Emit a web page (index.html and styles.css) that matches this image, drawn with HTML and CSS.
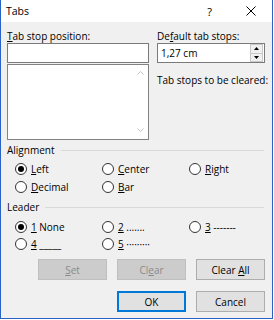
FILE: index.html
```html
<!DOCTYPE html>
<html>
<head>
<meta charset="utf-8">
<link rel="stylesheet" href="styles.css">
</head>
<body>
<div class="window">
  <div class="titlebar">
    <span class="title">Tabs</span>
    <span class="help">?</span>
    <svg class="close" width="10" height="10" viewBox="0 0 10 10"><path d="M0.5 0.5 L9.5 9.5 M9.5 0.5 L0.5 9.5" stroke="#000" stroke-width="1"/></svg>
  </div>
  <div class="content">
    <div class="top">
      <div class="col">
        <div class="label"><u>T</u>ab stop position:</div>
        <div class="input"></div>
        <div class="list">
          <div class="list-body"></div>
          <div class="scroll">
            <svg width="7" height="4" viewBox="0 0 7 4"><path d="M0.5 3.5 L3.5 0.5 L6.5 3.5" fill="none" stroke="#c4c4c4" stroke-width="1"/></svg>
            <svg width="7" height="4" viewBox="0 0 7 4"><path d="M0.5 0.5 L3.5 3.5 L6.5 0.5" fill="none" stroke="#c4c4c4" stroke-width="1"/></svg>
          </div>
        </div>
      </div>
      <div class="col">
        <div class="label">De<u>f</u>ault tab stops:</div>
        <div class="spin">
          <span class="spin-val">1,27 cm</span>
          <div class="spin-btns">
            <div class="sbtn"><svg width="5" height="3" viewBox="0 0 5 3"><path d="M0 3 L2.5 0 L5 3 Z" fill="#000"/></svg></div>
            <div class="sbtn"><svg width="5" height="3" viewBox="0 0 5 3"><path d="M0 0 L2.5 3 L5 0 Z" fill="#000"/></svg></div>
          </div>
        </div>
        <div class="label cleared">Tab stops to be cleared:</div>
      </div>
    </div>

    <div class="group-label"><span>Alignment</span><div class="rule"></div></div>
    <div class="radios align">
      <div class="radio"><span class="dot on"></span><span><u>L</u>eft</span></div>
      <div class="radio"><span class="dot"></span><span><u>C</u>enter</span></div>
      <div class="radio"><span class="dot"></span><span><u>R</u>ight</span></div>
      <div class="radio"><span class="dot"></span><span><u>D</u>ecimal</span></div>
      <div class="radio"><span class="dot"></span><span><u>B</u>ar</span></div>
    </div>

    <div class="group-label leader-label"><span>Leader</span><div class="rule"></div></div>
    <div class="radios leader">
      <div class="radio"><span class="dot on"></span><span><u>1</u> None</span></div>
      <div class="radio"><span class="dot"></span><span><u>2</u> .......</span></div>
      <div class="radio"><span class="dot"></span><span><u>3</u> -------</span></div>
      <div class="radio"><span class="dot"></span><span><u>4</u> _____</span></div>
      <div class="radio"><span class="dot"></span><span><u>5</u> ·········</span></div>
    </div>

    <div class="btn-row first">
      <div class="btn disabled"><span><u>S</u>et</span></div>
      <div class="btn disabled"><span>Cl<u>e</u>ar</span></div>
      <div class="btn"><span>Clear <u>A</u>ll</span></div>
    </div>
    <div class="btn-row second">
      <div class="btn primary"><span>OK</span></div>
      <div class="btn"><span>Cancel</span></div>
    </div>
  </div>
</div>
</body>
</html>
```

FILE: styles.css
```css
html, body {
  margin: 0;
  padding: 0;
  background: #ffffff;
}
body {
  font-family: "Open Sans", "Noto Sans", sans-serif;
  font-size: 10px;
  color: #000;
}
u {
  text-decoration: underline;
  text-underline-offset: 1px;
}
.window {
  width: 273px;
  height: 319px;
  box-sizing: border-box;
  border: 1px solid #2a63c6;
  border-top: none;
  background: #f0f0f0;
  display: flex;
  flex-direction: column;
}
.titlebar {
  height: 22px;
  background: #fff;
  display: flex;
  align-items: center;
  padding-left: 5px;
  padding-right: 16px;
}
.title {
  font-size: 10.5px;
  flex: 1;
}
.help {
  font-size: 11px;
  margin-right: 34px;
}
.close {
  display: block;
}
.content {
  padding: 7px 7px 0 6px;
  display: flex;
  flex-direction: column;
}
.top {
  display: grid;
  grid-template-columns: 142px 108px;
  column-gap: 8px;
}
.col {
  display: flex;
  flex-direction: column;
}
.label {
  height: 14px;
  line-height: 14px;
  white-space: nowrap;
}
.input {
  height: 20px;
  box-sizing: border-box;
  border: 1px solid #7a7a7a;
  background: #fff;
}
.list {
  margin-top: 1px;
  height: 76px;
  box-sizing: border-box;
  border: 1px solid #828282;
  background: #fff;
  display: flex;
}
.list-body {
  flex: 1;
}
.scroll {
  width: 15px;
  display: flex;
  flex-direction: column;
  justify-content: space-between;
  align-items: center;
  padding: 6px 0 7px;
  box-sizing: border-box;
}
.scroll svg {
  display: block;
}
.spin {
  height: 20px;
  box-sizing: border-box;
  border: 1px solid #7a7a7a;
  background: #fff;
  display: flex;
  align-items: center;
  padding-left: 3px;
}
.spin-val {
  flex: 1;
}
.spin-btns {
  width: 13px;
  height: 18px;
  display: flex;
  flex-direction: column;
  margin-right: 1px;
}
.sbtn {
  flex: 1;
  border: 1px solid #c8c8c8;
  background: #f0f0f0;
  display: flex;
  align-items: center;
  justify-content: center;
}
.sbtn + .sbtn {
  border-top: none;
}
.sbtn svg {
  display: block;
}
.cleared {
  margin-top: 10px;
}
.group-label {
  margin-top: 3px;
  height: 14px;
  line-height: 14px;
  display: flex;
  align-items: center;
}
.group-label .rule {
  flex: 1;
  height: 1px;
  background: #d9d9d9;
  margin-left: 6px;
  margin-right: 1px;
}
.leader-label {
  margin-top: 4px;
}
.radios {
  display: grid;
  grid-template-columns: 87px 87px 80px;
  padding-left: 8px;
}
.align {
  margin-top: 3px;
  grid-auto-rows: 18px;
}
.leader {
  margin-top: 4px;
  grid-auto-rows: 17px;
}
.radio {
  display: flex;
  align-items: center;
  white-space: nowrap;
}
.dot {
  width: 12px;
  height: 12px;
  box-sizing: border-box;
  border: 1px solid #333;
  border-radius: 50%;
  background: #fff;
  margin-right: 4px;
  display: flex;
  align-items: center;
  justify-content: center;
  flex: none;
}
.dot.on::after {
  content: "";
  width: 6px;
  height: 6px;
  border-radius: 50%;
  background: #000;
}
.btn-row {
  display: flex;
  justify-content: flex-end;
  gap: 10px;
}
.btn-row.first {
  margin-top: 7px;
}
.btn-row.second {
  margin-top: 11px;
}
.btn {
  width: 69px;
  height: 21px;
  box-sizing: border-box;
  border: 1px solid #adadad;
  background: #e1e1e1;
  display: flex;
  align-items: center;
  justify-content: center;
  white-space: nowrap;
}
.btn.disabled {
  background: #cccccc;
  border-color: #bfbfbf;
  color: #8a8a8a;
}
.btn.primary {
  border: 2px solid #0078d7;
}
```
